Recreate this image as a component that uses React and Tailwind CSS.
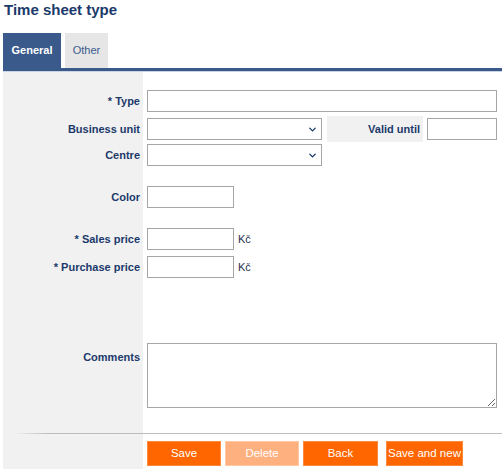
import { ChevronDown } from "lucide-react"

const label = "w-[140px] shrink-0 bg-[#f1f1f1] pr-[3px] text-right text-[11px] font-bold text-[#1b3a6b]"
const input = "block h-[22px] border border-[#a6a6a6] bg-white px-1 text-[11px] outline-none"

function Row({ text, children, className = "" }) {
  return (
    <div className={`flex ${className}`}>
      <div className={`${label} flex items-center justify-end`}>{text}</div>
      <div className="flex flex-1 items-center pl-[4px]">{children}</div>
    </div>
  )
}

function Spacer({ h }) {
  return (
    <div className="flex" style={{ height: h }}>
      <div className="w-[140px] bg-[#f1f1f1]"></div>
    </div>
  )
}

function Select({ width }) {
  return (
    <div className="relative h-[22px]" style={{ width }}>
      <select className={`${input} w-full appearance-none`}>
        <option></option>
      </select>
      <ChevronDown
        className="pointer-events-none absolute right-[4px] top-[6px] text-[#1b3a6b]"
        size={11}
        strokeWidth={3}
      />
    </div>
  )
}

function Button({ children, disabled, className = "" }) {
  return (
    <button
      className={`h-[25px] whitespace-nowrap border text-[11.5px] text-white ${
        disabled ? "border-[#ffc9a6] bg-[#ffb07f]" : "border-[#ff8a3d] bg-[#ff6600]"
      } ${className}`}
    >
      {children}
    </button>
  )
}

export default function App() {
  return (
    <div className="h-[469px] w-[502px] overflow-hidden bg-white font-['Liberation_Sans',Arial,sans-serif]">
      <h1 className="pl-[4px] pt-[1px] text-[15px] font-bold leading-[18px] text-[#1b3a6b]">Time sheet type</h1>

      <div className="ml-[3px] mt-[14px]">
        <div className="flex gap-[4px]">
          <div className="flex h-[35px] w-[58px] items-center justify-center bg-[#3a5a8c] text-[11px] font-bold text-white">
            General
          </div>
          <div className="flex h-[35px] w-[43px] items-center justify-center bg-[#e6e6e6] text-[11px] text-[#3a5a8c]">
            Other
          </div>
        </div>
        <div className="h-[3px] bg-[#3a5a8c]"></div>
        <div className="h-[1px] bg-[#c9d3e2]"></div>

        <Spacer h={18} />
        <Row text="* Type" className="h-[22px]">
          <input className={`${input} w-[350px]`} />
        </Row>
        <Spacer h={4} />
        <Row text="Business unit" className="h-[26px]">
          <Select width={175} />
          <div className="ml-[5px] flex h-[26px] w-[96px] items-center justify-end bg-[#f1f1f1] pr-[3px] text-[11px] font-bold text-[#1b3a6b]">
            Valid until
          </div>
          <input className={`${input} ml-[4px] w-[70px]`} />
        </Row>
        <Spacer h={2} />
        <Row text="Centre" className="h-[22px]">
          <Select width={175} />
        </Row>
        <Spacer h={20} />
        <Row text="Color" className="h-[22px]">
          <input className={`${input} w-[87px]`} />
        </Row>
        <Spacer h={20} />
        <Row text="* Sales price" className="h-[22px]">
          <input className={`${input} w-[87px]`} />
          <span className="ml-[4px] text-[11px] text-[#1f2f4f]">Kč</span>
        </Row>
        <Spacer h={6} />
        <Row text="* Purchase price" className="h-[22px]">
          <input className={`${input} w-[87px]`} />
          <span className="ml-[4px] text-[11px] text-[#1f2f4f]">Kč</span>
        </Row>
        <Spacer h={65} />
        <div className="flex h-[65px]">
          <div className={`${label} pt-[6px]`}>Comments</div>
          <div className="flex-1 pl-[4px]">
            <textarea className="block h-[65px] w-[350px] border border-[#a6a6a6] bg-white p-1 text-[11px] outline-none"></textarea>
          </div>
        </div>
        <Spacer h={25} />
        <div className="relative h-[8px]">
          <div className="absolute inset-0 w-[140px] bg-[#f1f1f1]"></div>
          <div className="absolute left-0 right-0 top-0 h-[1px] bg-[linear-gradient(to_right,transparent_10px,#bdbdbd_45px)]"></div>
        </div>
        <div className="flex h-[30px]">
          <div className="w-[140px] shrink-0 bg-[#f1f1f1]"></div>
          <div className="flex items-start pl-[4px]">
            <Button className="w-[74px]">Save</Button>
            <Button disabled className="ml-[4px] w-[74px]">Delete</Button>
            <Button className="ml-[4px] w-[75px]">Back</Button>
            <Button className="ml-[8px] w-[77px]">Save and new</Button>
          </div>
        </div>
      </div>
    </div>
  )
}
